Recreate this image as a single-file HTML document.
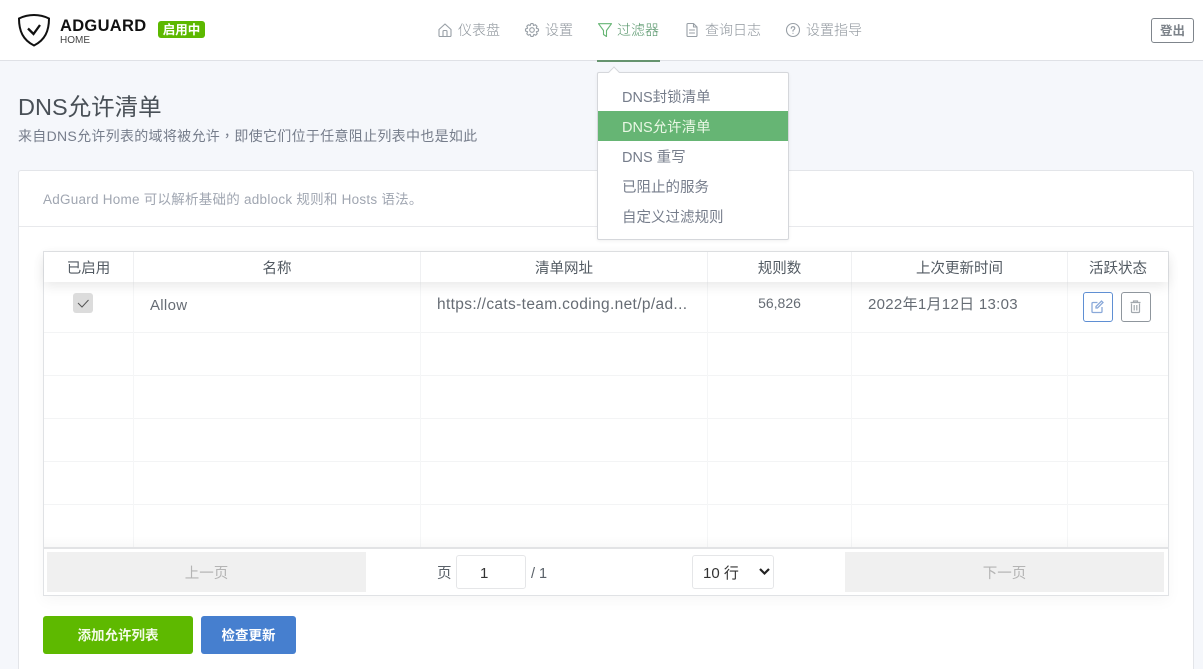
<!DOCTYPE html>
<html><head><meta charset="utf-8">
<style>
html,body{margin:0;padding:0;width:1203px;height:669px;overflow:hidden;background:#f5f7fb}
body{font-family:"Liberation Sans","Noto Sans CJK SC",sans-serif;color:#495057;position:relative}
.a{position:absolute;white-space:nowrap}
.nav{top:21px;height:18px;line-height:18px;font-size:14px;color:#8f969d;font-weight:300}
.ic{position:absolute;fill:none;stroke:#989fa6;stroke-width:1.100;stroke-linecap:round;stroke-linejoin:round}
.mi{left:598px;width:190px;height:30px;line-height:34px;font-size:14.500px;color:#767d8b;text-indent:24px}
.th{top:252px;height:30px;line-height:35px;text-align:center;font-size:14.500px;color:#525a62}
.vl{position:absolute;width:1px;background:#f5f6f7}
.hl{position:absolute;left:44px;width:1124px;height:1px;background:#f3f4f5}
.td{top:294px;height:21px;line-height:21px;font-size:15px;color:#666c74}
</style></head><body>
<!-- header -->
<div class="a" style="left:0;top:0;width:1203px;height:60px;background:#fff;border-bottom:1px solid #dfe1e6"></div>
<svg class="a" style="left:17px;top:13px" width="34" height="34" viewBox="0 0 34 34"><path d="M17 2C11 2 6 3.500 2 5.500C2 18 6 27 17 32.500C28 27 32 18 32 5.500C28 3.500 23 2 17 2Z" fill="none" stroke="#111" stroke-width="2"/><path d="M11 15.500L16.500 21L23 12" fill="none" stroke="#111" stroke-width="2.300"/></svg>
<div class="a" style="left:60px;top:15px;font-size:16.500px;line-height:22px;font-weight:700;color:#111;letter-spacing:.3px">ADGUARD</div>
<div class="a" style="left:60px;top:34px;font-size:10px;line-height:13px;color:#444">HOME</div>
<div class="a" style="left:158px;top:21px;width:47px;height:17px;background:#5cb800;border-radius:3px;color:#fff;font-size:12.500px;font-weight:700;line-height:19px;text-align:center">启用中</div>

<svg class="ic" style="left:437px;top:22px" width="16" height="16" viewBox="0 0 16 16"><path d="M2 7.500L8 2L14 7.500V13.500Q14 14.500 13 14.500H3Q2 14.500 2 13.500ZM6 14.500V9.500Q6 8.500 7 8.500H9Q10 8.500 10 9.500V14.500"/></svg>
<div class="a nav" style="left:458px">仪表盘</div>
<svg class="ic" style="left:524px;top:22px" width="16" height="16" viewBox="0 0 16 16"><circle cx="8" cy="8" r="2.300"/><path d="M7 1.500H9L9.500 3.500L11.300 2.700L13 4.300L12.300 6.200L14.500 7V9L12.400 9.800L13.200 11.700L11.700 13.200L9.800 12.400L9 14.500H7L6.200 12.400L4.300 13.200L2.800 11.700L3.600 9.800L1.500 9V7L3.600 6.200L2.800 4.300L4.300 2.800L6.200 3.500Z"/></svg>
<div class="a nav" style="left:545px">设置</div>
<svg class="ic" style="left:597px;top:22px;stroke:#66b574" width="16" height="16" viewBox="0 0 16 16"><path d="M1.500 1.700H14.500L9.500 8.500V14.500L6.500 12.500V8.500Z"/></svg>
<div class="a nav" style="left:617px;color:#56956a">过滤器</div>
<div class="a" style="left:597px;top:60px;width:63px;height:2px;background:#66946f"></div>
<svg class="ic" style="left:684px;top:22px" width="16" height="16" viewBox="0 0 16 16"><path d="M3 2.500Q3 1.500 4 1.500H9.500L13 5V13.500Q13 14.500 12 14.500H4Q3 14.500 3 13.500ZM9.500 1.500V5H13M5.500 8H10.500M5.500 11H10.500"/></svg>
<div class="a nav" style="left:705px">查询日志</div>
<svg class="ic" style="left:785px;top:22px" width="16" height="16" viewBox="0 0 16 16"><circle cx="8" cy="8" r="6.500"/><path d="M6.200 6.300Q6.300 4.700 8 4.700Q9.800 4.700 9.800 6.200Q9.800 7.200 8 8.300V9.200M8 11.300V11.400"/></svg>
<div class="a nav" style="left:806px">设置指导</div>

<div class="a" style="left:1151px;top:18px;width:41px;height:23px;border:1px solid #7f858c;border-radius:3px;background:#fff;font-size:12.500px;font-weight:700;line-height:25px;text-align:center;color:#7d838a">登出</div>

<!-- title -->
<div class="a" style="left:18px;top:91px;font-size:23.500px;line-height:33px;color:#495057">DNS允许清单</div>
<div class="a" style="left:18px;top:126px;font-size:14px;line-height:20px;color:#767d8b;letter-spacing:.3px">来自DNS允许列表的域将被允许<span style="font-family:'Noto Sans CJK TC',sans-serif">，</span>即使它们位于任意阻止列表中也是如此</div>

<!-- card -->
<div class="a" style="left:18px;top:170px;width:1174px;height:520px;background:#fff;border:1px solid #e3e5e9;border-radius:3px"></div>
<div class="a" style="left:19px;top:226px;width:1174px;height:1px;background:#e8e9ec"></div>
<div class="a" style="left:43px;top:191px;font-size:13.500px;line-height:18px;color:#a0a6b1;letter-spacing:.25px">AdGuard Home 可以解析基础的 adblock 规则和 Hosts 语法。</div>

<!-- table -->
<div class="a" style="left:43px;top:251px;width:1124px;height:343px;border:1px solid #e0e2e5;background:#fff;box-shadow:0 5px 14px rgba(0,0,0,.035)"></div>
<div class="hl" style="top:332px"></div><div class="hl" style="top:375px"></div><div class="hl" style="top:418px"></div><div class="hl" style="top:461px"></div><div class="hl" style="top:504px"></div>
<div class="vl" style="left:133px;top:282px;height:266px"></div><div class="vl" style="left:420px;top:282px;height:266px"></div><div class="vl" style="left:707px;top:282px;height:266px"></div><div class="vl" style="left:851px;top:282px;height:266px"></div><div class="vl" style="left:1067px;top:282px;height:266px"></div>
<div class="a" style="left:44px;top:252px;width:1124px;height:30px;background:#fff;box-shadow:0 4px 12px rgba(0,0,0,.09)"></div>
<div class="a" style="left:44px;top:536px;width:1124px;height:11px;background:linear-gradient(rgba(0,0,0,0),rgba(0,0,0,.025))"></div>
<div class="vl" style="left:133px;top:252px;height:30px;background:#eff0f2"></div><div class="vl" style="left:420px;top:252px;height:30px;background:#eff0f2"></div><div class="vl" style="left:707px;top:252px;height:30px;background:#eff0f2"></div><div class="vl" style="left:851px;top:252px;height:30px;background:#eff0f2"></div><div class="vl" style="left:1067px;top:252px;height:30px;background:#eff0f2"></div>
<div class="a th" style="left:44px;width:89px">已启用</div>
<div class="a th" style="left:134px;width:286px">名称</div>
<div class="a th" style="left:421px;width:286px">清单网址</div>
<div class="a th" style="left:708px;width:143px">规则数</div>
<div class="a th" style="left:852px;width:215px">上次更新时间</div>
<div class="a th" style="left:1068px;width:100px">活跃状态</div>

<div class="a" style="left:73px;top:293px;width:20px;height:20px;background:#dcdcdc;border-radius:3px"></div>
<svg class="a" style="left:73px;top:293px" width="20" height="20" viewBox="0 0 20 20"><path d="M5 10L9 14L15.500 7" fill="none" stroke="#555" stroke-width="1"/></svg>
<div class="a td" style="left:150px;top:295px;letter-spacing:.3px">Allow</div>
<div class="a td" style="left:437px;font-size:15.500px;letter-spacing:.35px">https://cats-team.coding.net/p/ad...</div>
<div class="a td" style="left:708px;width:143px;text-align:center;font-size:14px;top:293px">56,826</div>
<div class="a td" style="left:868px;font-size:15px;letter-spacing:.3px">2022年1月12日 13:03</div>

<div class="a" style="left:1083px;top:292px;width:28px;height:28px;border:1px solid #5f8fd3;border-radius:3px;background:#fff"></div>
<svg class="a" style="left:1090px;top:299px" width="15" height="15" viewBox="0 0 15 15" fill="none" stroke="#8aa9d9" stroke-width="1.300"><path d="M12 8V12.500Q12 13.500 11 13.500H3Q2 13.500 2 12.500V4.500Q2 3.500 3 3.500H7.500"/><path d="M6 7.500L11.500 2L13 3.500L7.500 9H6Z"/></svg>
<div class="a" style="left:1121px;top:292px;width:28px;height:28px;border:1px solid #8f969d;border-radius:3px;background:#fff"></div>
<svg class="a" style="left:1128px;top:299px" width="15" height="15" viewBox="0 0 15 15" fill="none" stroke="#a2a8ae" stroke-width="1.200"><path d="M3.500 4.500V12.500Q3.500 13.500 4.500 13.500H10.500Q11.500 13.500 11.500 12.500V4.500M2.500 3.500H12.500M5.500 3.500V2H9.500V3.500M6.200 6V11.500M8.800 6V11.500"/></svg>

<!-- pagination -->
<div class="a" style="left:44px;top:547px;width:1124px;height:2px;background:#e2e3e5"></div>
<div class="a" style="left:47px;top:552px;width:319px;height:40px;background:#f0f0f0;font-size:14.500px;line-height:45px;text-align:center;color:#b4b4b4">上一页</div>
<div class="a" style="left:845px;top:552px;width:319px;height:40px;background:#f0f0f0;font-size:14.500px;line-height:45px;text-align:center;color:#b4b4b4">下一页</div>
<div class="a" style="left:437px;top:564px;font-size:14.500px;line-height:20px;color:#5a6169">页</div>
<div class="a" style="left:456px;top:555px;width:68px;height:32px;border:1px solid #e5e6e8;border-radius:3px;background:#fff;font-size:15px;line-height:35px;color:#333;text-indent:23px">1</div>
<div class="a" style="left:531px;top:564px;font-size:14.500px;line-height:20px;color:#5a6169">/ 1</div>
<div class="a" style="left:692px;top:555px;width:80px;height:32px;border:1px solid #e5e6e8;border-radius:3px;background:#fff;font-size:15px;line-height:35px;color:#333;text-indent:10px">10 行</div>
<svg class="a" style="left:758px;top:567px" width="13" height="9" viewBox="0 0 13 9"><path d="M2 2L6.500 6.500L11 2" fill="none" stroke="#222" stroke-width="2.200"/></svg>

<div class="a" style="left:43px;top:616px;width:150px;height:38px;background:#5eb900;border-radius:3px;color:#f4fbe9;font-size:13.500px;font-weight:700;line-height:40px;text-align:center">添加允许列表</div>
<div class="a" style="left:201px;top:616px;width:95px;height:38px;background:#467fcf;border-radius:3px;color:#fff;font-size:13.500px;font-weight:700;line-height:40px;text-align:center">检查更新</div>

<!-- dropdown -->
<div class="a" style="left:597px;top:72px;width:190px;height:166px;background:#fff;border:1px solid #d5d7db;border-radius:2px;box-shadow:0 1px 3px rgba(0,0,0,.06)"></div>
<div class="a" style="left:610px;top:68px;width:7px;height:7px;background:#fff;border-left:1px solid #d5d7db;border-top:1px solid #d5d7db;transform:rotate(45deg)"></div>
<div class="a mi" style="top:81px">DNS封锁清单</div>
<div class="a mi" style="top:111px;background:#66b574;color:#e9f7e4">DNS允许清单</div>
<div class="a mi" style="top:141px">DNS 重写</div>
<div class="a mi" style="top:171px">已阻止的服务</div>
<div class="a mi" style="top:201px">自定义过滤规则</div>
</body></html>
